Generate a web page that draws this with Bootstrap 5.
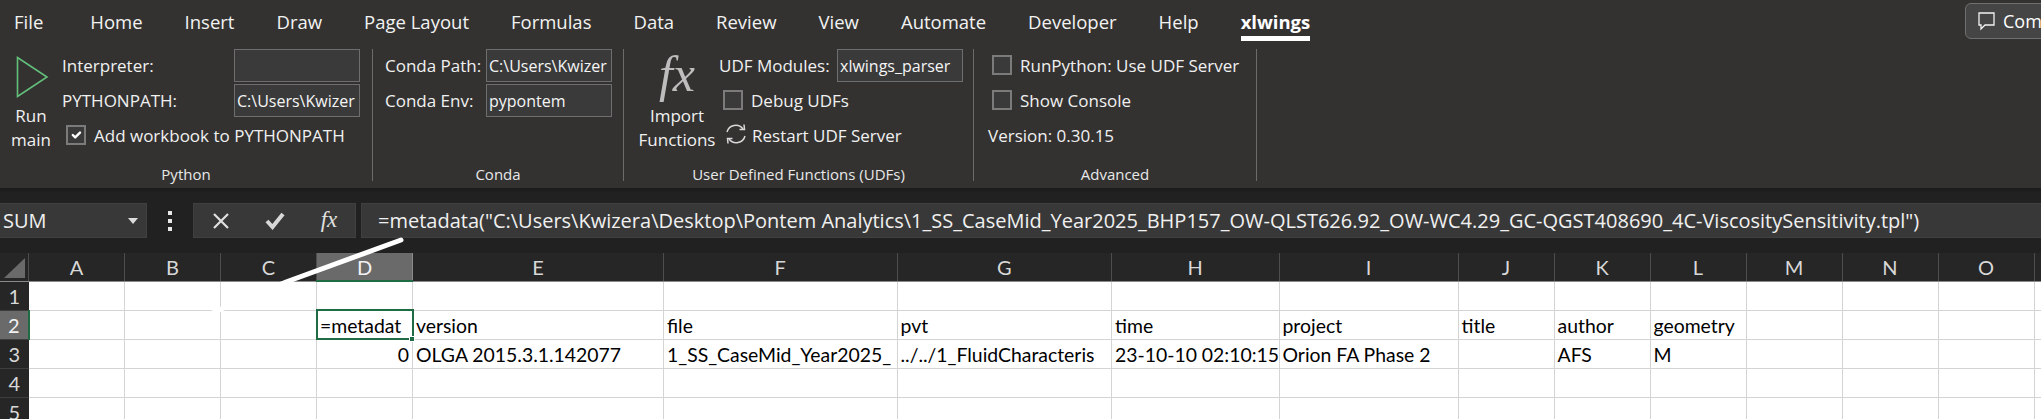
<!DOCTYPE html>
<html lang="en">
<head>
  <meta charset="UTF-8">
  <title>xlwings ribbon</title>
  <link href="https://cdn.jsdelivr.net/npm/bootstrap@5.3.0/dist/css/bootstrap.min.css" rel="stylesheet">
  <style>
    html, body { height: 100%; overflow: hidden; background: #212121; }
    body { font-family: "Open Sans", sans-serif; color: #f0f0f0; }
    .xl-page { position: relative; width: 2041px; height: 419px; overflow: hidden; }

    /* ribbon */
    .xl-ribbon { height: 188px; background: #333231; }
    .xl-tabs { height: 49px; padding-left: 14px; font-size: 18.5px; position: relative; }
    .xl-tabs .nav-link { color: #f2f2f2; padding: 8px 0 0; margin-right: 42px; height: 41px; }
    .xl-tabs .xl-first { margin-right: 47px; }
    .xl-tabs .xl-on { font-weight: 700; border-bottom: 5px solid #fff; color: #fff; height: 41px; }
    .xl-comment { position: absolute; left: 1965px; top: 3px; width: 90px; height: 36px; background: #454545; border: 1px solid #707070; border-radius: 6px; padding-left: 12px; font-size: 18px; color: #fff; }
    .xl-groups { height: 132px; }
    .xl-group { border-right: 1px solid #6b6b6b; height: 132px; }
    .xl-g-python { width: 373px; }
    .xl-g-conda { width: 251px; }
    .xl-g-udf { width: 350px; }
    .xl-g-adv { width: 283px; }
    .xl-g-adv .xl-body { padding-left: 14px; }
    .xl-body { height: 119px; font-size: 17px; }
    .xl-label { height: 13px; line-height: 13px; font-size: 15px; text-align: center; color: #e8e8e8; }
    .xl-big { text-align: center; line-height: 24px; }
    .xl-big svg { display: block; }
    .xl-run { width: 62px; padding-top: 7px; }
    .xl-run .xl-captions { margin-top: 6px; }
    .xl-import { width: 80px; margin-left: 13px; margin-right: 2px; white-space: nowrap; }
    .xl-fx { display: block; height: 55px; font-family: "Liberation Serif", serif; font-style: italic; font-size: 50px; line-height: 50px; color: #bdbdbd; }
    .xl-row { height: 35px; display: flex; align-items: flex-start; }
    .xl-row > span { line-height: 34px; white-space: nowrap; }
    .xl-name-py { width: 172px; }
    .xl-name-conda { width: 101px; }
    .xl-name-udf { width: 118px; }
    .xl-restart { margin: 3px 4px 0 1px; }
    .xl-ribbon .form-control { width: 126px; height: 33px; padding: 0 2px; border-radius: 0; border: 1px solid #6e6e6e; background: #3a3a3a; color: #f5f5f5; font-size: 16px; font-family: inherit; overflow: hidden; }
    .xl-ribbon .form-check-input { width: 20px; height: 20px; margin: 6px 8px 0 0; flex: none; border-radius: 0; border: 2px solid #7b7b7b; background-color: #3a3a3a; }
    .xl-ribbon .form-check-input:checked { background-color: #3a3a3a; border-color: #7b7b7b; }

    /* formula bar */
    .xl-fbar { height: 65px; padding-top: 15px; background: linear-gradient(#1b1b1b, #212121 5px); font-size: 20px; }
    .xl-fbar-in { height: 35px; }
    .xl-box { background: #383838; border: 1px solid #404040; height: 35px; }
    .xl-namebox { width: 147px; padding-left: 3px; border-left: 0; }
    .xl-dots { width: 46px; }
    .xl-dots i { display: block; width: 4px; height: 4px; background: #e8e8e8; margin: 2px 0; }
    .xl-btns { width: 163px; }
    .xl-btns span { font-family: "Liberation Serif", serif; font-style: italic; font-size: 23px; color: #e0e0e0; }
    .xl-formula { flex: 1; margin-left: 5px; padding-left: 16px; white-space: nowrap; border-right: 0; }

    /* grid */
    .xl-sheet { table-layout: fixed; width: 2041px; font-family: Lato, sans-serif; font-size: 19.4px; color: #000; }
    .xl-sheet th { background: #262626; color: #d8d8d8; font-weight: 400; text-align: center; height: 28px; border-right: 1px solid #4d4d4d; border-bottom: 1px solid #8a8a8a; padding: 0; font-size: 20px; line-height: 1; }
    .xl-sheet tbody th { height: 29px; border-right: 0; border-bottom: 1px solid #3d3d3d; }
    .xl-sheet th.xl-sel { background: #6a6a6a; color: #f2f2f2; }
    .xl-sheet thead th.xl-sel { border-bottom: 2px solid #1f6b43; border-right-color: #8a8a8a; }
    .xl-sheet tbody th.xl-sel { border-right: 2px solid #1f6b43; }
    .xl-sheet td { background: #fff; height: 29px; padding: 2px 3px 0; line-height: 26px; border-right: 1px solid #d4d4d4; border-bottom: 1px solid #d4d4d4; white-space: nowrap; overflow: hidden; }
    .xl-sheet td.xl-num { text-align: right; }
    .xl-sheet td.xl-active { position: relative; outline: 2px solid #1f6b43; outline-offset: -1px; overflow: visible; }
    .xl-handle { position: absolute; right: -3px; bottom: -3px; width: 6px; height: 6px; background: #1f6b43; border: 1px solid #fff; }
    .xl-corner { position: absolute; left: 4px; top: 258px; }
    .xl-stroke { position: absolute; left: 0; top: 0; pointer-events: none; }
  </style>
</head>
<body>
  <div class="xl-page">
    <div class="xl-ribbon">
      <ul class="nav xl-tabs">
        <li class="nav-item"><a class="nav-link xl-first" href="#">File</a></li>
        <li class="nav-item"><a class="nav-link" href="#">Home</a></li>
        <li class="nav-item"><a class="nav-link" href="#">Insert</a></li>
        <li class="nav-item"><a class="nav-link" href="#">Draw</a></li>
        <li class="nav-item"><a class="nav-link" href="#">Page Layout</a></li>
        <li class="nav-item"><a class="nav-link" href="#">Formulas</a></li>
        <li class="nav-item"><a class="nav-link" href="#">Data</a></li>
        <li class="nav-item"><a class="nav-link" href="#">Review</a></li>
        <li class="nav-item"><a class="nav-link" href="#">View</a></li>
        <li class="nav-item"><a class="nav-link" href="#">Automate</a></li>
        <li class="nav-item"><a class="nav-link" href="#">Developer</a></li>
        <li class="nav-item"><a class="nav-link" href="#">Help</a></li>
        <li class="nav-item"><a class="nav-link xl-on" href="#">xlwings</a></li>
      </ul>
      <div class="xl-comment d-flex align-items-center gap-2">
        <svg class="flex-shrink-0" width="17" height="19" viewBox="0 0 17 19" fill="none" stroke="#f2f2f2" stroke-width="1.3"><path d="M1 1h15v12H7l-4 4v-4H1z"/></svg>
        <span>Com</span>
      </div>
      <div class="xl-groups d-flex">
        <div class="xl-group xl-g-python">
          <div class="xl-body d-flex">
            <div class="xl-big xl-run">
              <svg class="ms-3" width="33" height="42" viewBox="0 0 33 42" fill="none" stroke="#63c07b" stroke-width="1.6"><path d="M1.500 1.500v39L31 21z"/></svg>
              <div class="xl-captions">Run<br>main</div>
            </div>
            <div>
              <div class="xl-row"><span class="xl-name-py">Interpreter:</span><input class="form-control" type="text"></div>
              <div class="xl-row"><span class="xl-name-py">PYTHONPATH:</span><input class="form-control" type="text" value="C:\Users\Kwizer"></div>
              <div class="xl-row ps-1"><input class="form-check-input" type="checkbox" checked><span>Add workbook to PYTHONPATH</span></div>
            </div>
          </div>
          <div class="xl-label">Python</div>
        </div>
        <div class="xl-group xl-g-conda">
          <div class="xl-body ps-2 ms-1">
            <div class="xl-row"><span class="xl-name-conda">Conda Path:</span><input class="form-control" type="text" value="C:\Users\Kwizer"></div>
            <div class="xl-row"><span class="xl-name-conda">Conda Env:</span><input class="form-control" type="text" value="pypontem"></div>
          </div>
          <div class="xl-label">Conda</div>
        </div>
        <div class="xl-group xl-g-udf">
          <div class="xl-body d-flex">
            <div class="xl-big xl-import">
              <span class="xl-fx">fx</span>
              <div class="xl-captions">Import<br>Functions</div>
            </div>
            <div>
              <div class="xl-row"><span class="xl-name-udf">UDF Modules:</span><input class="form-control" type="text" value="xlwings_parser"></div>
              <div class="xl-row ps-1"><input class="form-check-input" type="checkbox"><span>Debug UDFs</span></div>
              <div class="xl-row ps-1">
                <svg class="flex-shrink-0 xl-restart" width="24" height="24" viewBox="0 0 24 24" fill="none" stroke="#d8d8d8" stroke-width="1.5"><path d="M3 10a9 9 0 0 1 16-3"/><path d="M21 14a9 9 0 0 1-16 3"/><path d="M15.500 7.500h5l-.5-5"/><path d="M8.500 16.500h-5l.5 5"/></svg>
                <span>Restart UDF Server</span>
              </div>
            </div>
          </div>
          <div class="xl-label">User Defined Functions (UDFs)</div>
        </div>
        <div class="xl-group xl-g-adv">
          <div class="xl-body">
            <div class="xl-row ps-1"><input class="form-check-input" type="checkbox"><span>RunPython: Use UDF Server</span></div>
            <div class="xl-row ps-1"><input class="form-check-input" type="checkbox"><span>Show Console</span></div>
            <div class="xl-row"><span>Version: 0.30.15</span></div>
          </div>
          <div class="xl-label">Advanced</div>
        </div>
      </div>
    </div>

    <div class="xl-fbar">
      <div class="xl-fbar-in d-flex align-items-stretch">
        <div class="xl-box xl-namebox d-flex align-items-center justify-content-between pe-2">
          <span>SUM</span>
          <svg width="10" height="6" viewBox="0 0 10 6" fill="#dcdcdc"><path d="M0 0h10L5 6z"/></svg>
        </div>
        <div class="xl-dots d-flex flex-column align-items-center justify-content-center"><i></i><i></i><i></i></div>
        <div class="xl-box xl-btns d-flex align-items-center justify-content-around">
          <svg width="18" height="18" viewBox="0 0 18 18" stroke="#e0e0e0" stroke-width="2.200"><path d="M2 2l14 14M16 2L2 16"/></svg>
          <svg width="20" height="18" viewBox="0 0 20 18" fill="none" stroke="#d8d8d8" stroke-width="4"><path d="M2 9l5.500 6L18 2"/></svg>
          <span>fx</span>
        </div>
        <div class="xl-box xl-formula d-flex align-items-center">=metadata("C:\Users\Kwizera\Desktop\Pontem Analytics\1_SS_CaseMid_Year2025_BHP157_OW-QLST626.92_OW-WC4.29_GC-QGST408690_4C-ViscositySensitivity.tpl")</div>
      </div>
    </div>

    <table class="xl-sheet" id="sheet"></table>

    <svg class="xl-corner" width="21" height="20" viewBox="0 0 21 20" fill="#6a6a6a"><path d="M21 0v20H0z"/></svg>
    <svg class="xl-stroke" width="2041" height="419" fill="none" stroke="#fff" stroke-width="5" stroke-linecap="round"><path d="M401 240L286 282L214 312"/></svg>
  </div>

  <script src="https://cdn.jsdelivr.net/npm/bootstrap@5.3.0/dist/js/bootstrap.bundle.min.js"></script>
  <script>
    // kolom dan lebar dari screenshot
    const lebar = { A: 96, B: 96, C: 96, D: 96, E: 251, F: 233.5, G: 214.5, H: 167.5, I: 179, J: 96, K: 96, L: 96, M: 96, N: 96, O: 96, P: 96 };
    const kolom = Object.keys(lebar);
    const isi = {
      2: { D: '=metadat', E: 'version', F: 'file', G: 'pvt', H: 'time', I: 'project', J: 'title', K: 'author', L: 'geometry' },
      3: { D: '0', E: 'OLGA 2015.3.1.142077', F: '1_SS_CaseMid_Year2025_', G: '../../1_FluidCharacteris', H: '23-10-10 02:10:15', I: 'Orion FA Phase 2', K: 'AFS', L: 'M' }
    };

    let html = '<colgroup><col style="width:28.5px">';
    kolom.forEach(k => { html += `<col style="width:${lebar[k]}px">`; });
    html += '</colgroup><thead><tr><th></th>';
    kolom.forEach(k => { html += `<th class="${k === 'D' ? 'xl-sel' : ''}">${k}</th>`; });
    html += '</tr></thead><tbody>';
    for (let r = 1; r <= 5; r++) {
      html += `<tr><th class="${r === 2 ? 'xl-sel' : ''}">${r}</th>`;
      kolom.forEach(k => {
        const v = (isi[r] && isi[r][k]) || '';
        if (r === 2 && k === 'D') {
          html += `<td class="xl-active">${v}<span class="xl-handle"></span></td>`;
        } else {
          html += `<td class="${r === 3 && k === 'D' ? 'xl-num' : ''}">${v}</td>`;
        }
      });
      html += '</tr>';
    }
    document.getElementById('sheet').innerHTML = html + '</tbody>';
  </script>
</body>
</html>
